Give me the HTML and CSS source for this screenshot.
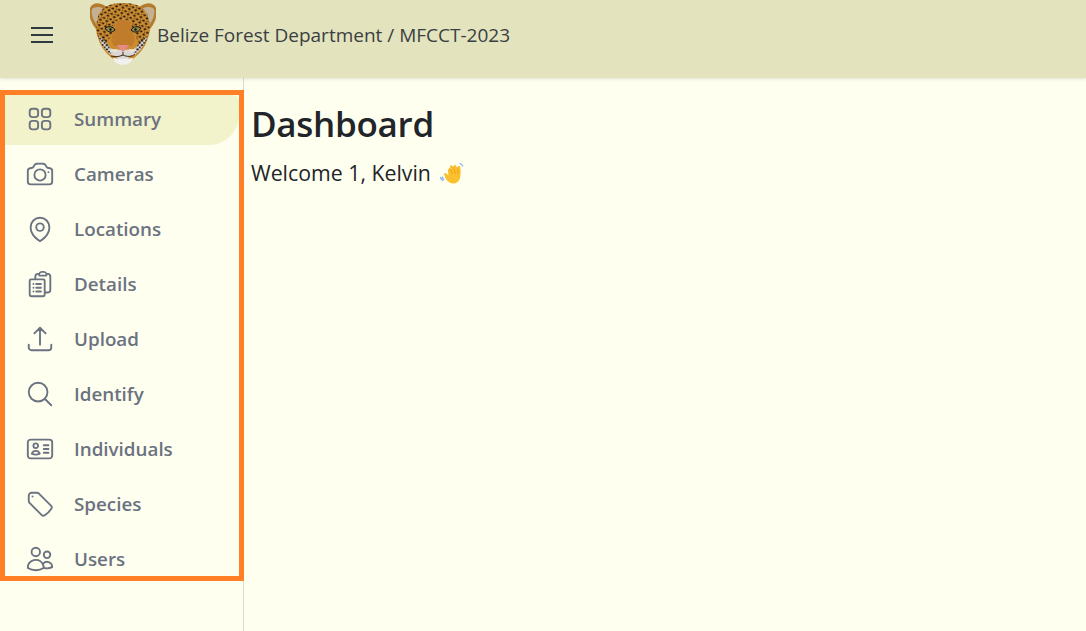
FILE: index.html
```
<!DOCTYPE html>
<html lang="en">
<head>
<meta charset="utf-8">
<title>Dashboard</title>
<link rel="stylesheet" href="styles.css">
</head>
<body>
<svg class="defs" width="0" height="0" aria-hidden="true">
  <defs>
    <pattern id="spots" width="6.500" height="5.500" patternUnits="userSpaceOnUse" patternTransform="rotate(12)">
      <ellipse cx="1.600" cy="1.400" rx="1.400" ry="1" fill="#21160c"/>
      <ellipse cx="4.800" cy="4" rx="1.500" ry="1" fill="#21160c"/>
      <circle cx="5.200" cy="1.200" r="0.600" fill="#3a2610"/>
    </pattern>
    <pattern id="cheek" width="4.400" height="4.400" patternUnits="userSpaceOnUse">
      <circle cx="1.200" cy="1.200" r="1.100" fill="#17120d"/>
      <circle cx="3.400" cy="3.400" r="1" fill="#17120d"/>
    </pattern>
  </defs>
</svg>
<header class="topbar">
  <button class="menu" type="button" aria-label="Menu"><span></span><span></span><span></span></button>
  <svg class="logo" viewBox="90 0 66 66" width="66" height="66" aria-hidden="true">
    <path d="M90 8c3-7 13-6 20 2l5 6-14 18c-7-5-14-17-11-26z" fill="#b47c2c"/>
    <path d="M92 9c3-3 11-3 16 3l3 5-10 13c-5-5-11-14-9-21z" fill="#c4b194"/>
    <path d="M99 13l7 9-5 8c-3-5-4-12-2-17z" fill="#8e8370"/>
    <path d="M156 8c-3-7-13-6-20 2l-5 6 14 18c7-5 14-17 11-26z" fill="#b47c2c"/>
    <path d="M154 9c-3-3-11-3-16 3l-3 5 10 13c5-5 11-14 9-21z" fill="#c4b194"/>
    <path d="M147 13l-7 9 5 7c3-5 4-12 2-16z" fill="#8e8370"/>
    <path d="M123 3c15 0 24 5 26 18 2 6 1 12-2 20-3 8-10 17-24 24-14-7-21-16-24-24-3-8-4-14-2-20 2-13 11-18 26-18z" fill="#cc8c30"/>
    <path d="M99 36c1 7 6 14 12 19l5 1 7 9 7-9 5-1c6-5 11-12 12-19-5 4-9 10-13 13l-11 1-11-1c-4-3-8-9-13-13z" fill="#dbd7d5"/>
    <path d="M123 3c15 0 24 5 26 18 1 5 1 9 0 14l-10 8-5-10-4-12h-14l-4 12-5 10-10-8c-1-5-1-9 0-14 2-13 11-18 26-18z" fill="url(#spots)"/>
    <path d="M98 36l7 3 5 9 3 4-3 2c-5-4-10-11-12-18zM148 36l-7 3-5 9-3 4 3 2c5-4 10-11 12-18z" fill="url(#cheek)"/>
    <path d="M117 20h12l6 20-3 6h-18l-3-6z" fill="#c07c2a"/>
    <path d="M105 28c3-2 8-2 10 2-3 3-7 3-10-2zM141 28c-3-2-8-2-10 2 3 3 7 3 10-2z" fill="#8a8a4c" stroke="#17120d" stroke-width="1"/>
    <circle cx="110.500" cy="29.500" r="1.200" fill="#17120d"/>
    <circle cx="135.500" cy="29.500" r="1.200" fill="#17120d"/>
    <path d="M117 45h12l-3 4-3 3-3-3z" fill="#e88a84"/>
    <path d="M123 52v3m-12 1c3 1 8 1 12-1 4 2 9 2 12-1" fill="none" stroke="#3a2a1a" stroke-width="1"/>
    <path d="M113 58c6 1 14 1 20 0-1 4-5 7-10 7s-9-3-10-7z" fill="#f1f0ee"/>
    <path d="M110 50c2 1 5 1 7 0m12 0c2 1 5 1 7 0" fill="none" stroke="#efe5d3" stroke-width="2"/>
  </svg>
  <span class="title">Belize Forest Department / MFCCT-2023</span>
</header>
<div class="layout">
  <aside class="sidebar">
    <nav class="nav">
      <a class="item active" href="#">
        <svg class="icon" viewBox="0 0 24 24"><path d="M3.750 6A2.250 2.250 0 0 1 6 3.750h2.250A2.250 2.250 0 0 1 10.500 6v2.250a2.250 2.250 0 0 1-2.250 2.250H6a2.250 2.250 0 0 1-2.250-2.250V6ZM3.750 15.750A2.250 2.250 0 0 1 6 13.500h2.250a2.250 2.250 0 0 1 2.250 2.250V18a2.250 2.250 0 0 1-2.250 2.250H6A2.250 2.250 0 0 1 3.750 18v-2.250ZM13.500 6a2.250 2.250 0 0 1 2.250-2.250H18A2.250 2.250 0 0 1 20.250 6v2.250A2.250 2.250 0 0 1 18 10.500h-2.250a2.250 2.250 0 0 1-2.250-2.250V6ZM13.500 15.750a2.250 2.250 0 0 1 2.250-2.250H18a2.250 2.250 0 0 1 2.250 2.250V18A2.250 2.250 0 0 1 18 20.250h-2.250A2.250 2.250 0 0 1 13.500 18v-2.250Z"/></svg>
        <span>Summary</span>
      </a>
      <a class="item" href="#">
        <svg class="icon" viewBox="0 0 24 24"><path d="M6.827 6.175A2.31 2.31 0 0 1 5.186 7.23c-.38.054-.757.112-1.134.175C2.999 7.58 2.25 8.507 2.25 9.574V18a2.25 2.25 0 0 0 2.25 2.25h15A2.25 2.25 0 0 0 21.75 18V9.574c0-1.067-.75-1.994-1.802-2.169a47.865 47.865 0 0 0-1.134-.175 2.31 2.31 0 0 1-1.64-1.055l-.822-1.316a2.192 2.192 0 0 0-1.736-1.039 48.774 48.774 0 0 0-5.232 0 2.192 2.192 0 0 0-1.736 1.039l-.821 1.316Z"/><path d="M16.5 12.75a4.5 4.5 0 1 1-9 0 4.5 4.5 0 0 1 9 0ZM18.75 10.5h.008v.008h-.008V10.5Z"/></svg>
        <span>Cameras</span>
      </a>
      <a class="item" href="#">
        <svg class="icon" viewBox="0 0 24 24"><path d="M15 10.5a3 3 0 1 1-6 0 3 3 0 0 1 6 0Z"/><path d="M19.5 10.5c0 7.142-7.5 11.25-7.5 11.25S4.5 17.642 4.5 10.5a7.5 7.5 0 1 1 15 0Z"/></svg>
        <span>Locations</span>
      </a>
      <a class="item" href="#">
        <svg class="icon" viewBox="0 0 24 24"><path d="M9 12h3.75M9 15h3.75M9 18h3.75m3 .75H18a2.25 2.25 0 0 0 2.25-2.25V6.108c0-1.135-.845-2.098-1.976-2.192a48.424 48.424 0 0 0-1.123-.08m-5.801 0c-.065.21-.1.433-.1.664 0 .414.336.75.75.75h4.5a.75.75 0 0 0 .75-.75 2.25 2.25 0 0 0-.1-.664m-5.8 0A2.251 2.251 0 0 1 13.5 2.25H15c1.012 0 1.867.668 2.15 1.586m-5.8 0c-.376.023-.75.05-1.124.08C9.095 4.01 8.25 4.973 8.25 6.108V8.25m0 0H4.875c-.621 0-1.125.504-1.125 1.125v11.25c0 .621.504 1.125 1.125 1.125h9.75c.621 0 1.125-.504 1.125-1.125V9.375c0-.621-.504-1.125-1.125-1.125H8.25ZM6.75 12h.008v.008H6.75V12Zm0 3h.008v.008H6.75V15Zm0 3h.008v.008H6.75V18Z"/></svg>
        <span>Details</span>
      </a>
      <a class="item" href="#">
        <svg class="icon" viewBox="0 0 24 24"><path d="M3 16.5v2.25A2.25 2.25 0 0 0 5.25 21h13.5A2.25 2.25 0 0 0 21 18.75V16.5m-13.5-9L12 3m0 0 4.5 4.5M12 3v13.5"/></svg>
        <span>Upload</span>
      </a>
      <a class="item" href="#">
        <svg class="icon" viewBox="0 0 24 24"><path d="m21 21-5.197-5.197m0 0A7.5 7.5 0 1 0 5.196 5.196a7.5 7.5 0 0 0 10.607 10.607Z"/></svg>
        <span>Identify</span>
      </a>
      <a class="item" href="#">
        <svg class="icon" viewBox="0 0 24 24"><path d="M15 9h3.75M15 12h3.75M15 15h3.75M4.5 19.5h15a2.25 2.25 0 0 0 2.25-2.25V6.75A2.25 2.25 0 0 0 19.5 4.5h-15a2.25 2.25 0 0 0-2.25 2.25v10.5A2.25 2.25 0 0 0 4.5 19.5Zm6-10.125a1.875 1.875 0 1 1-3.75 0 1.875 1.875 0 0 1 3.75 0Zm1.294 6.336a6.721 6.721 0 0 1-3.17.789 6.721 6.721 0 0 1-3.168-.789 3.376 3.376 0 0 1 6.338 0Z"/></svg>
        <span>Individuals</span>
      </a>
      <a class="item" href="#">
        <svg class="icon" viewBox="0 0 24 24"><path d="M9.568 3H5.25A2.25 2.25 0 0 0 3 5.25v4.318c0 .597.237 1.17.659 1.591l9.581 9.581c.699.699 1.78.872 2.607.33a18.095 18.095 0 0 0 5.223-5.223c.542-.827.369-1.908-.33-2.607L11.16 3.66A2.25 2.25 0 0 0 9.568 3Z"/><path d="M6 6h.008v.008H6V6Z"/></svg>
        <span>Species</span>
      </a>
      <a class="item" href="#">
        <svg class="icon" viewBox="0 0 24 24"><path d="M15 19.128a9.38 9.38 0 0 0 2.625.372 9.337 9.337 0 0 0 4.121-.952 4.125 4.125 0 0 0-7.533-2.493M15 19.128v-.003c0-1.113-.285-2.16-.786-3.07M15 19.128v.106A12.318 12.318 0 0 1 8.624 21c-2.331 0-4.512-.645-6.374-1.766l-.001-.109a6.375 6.375 0 0 1 11.964-3.07M12 6.375a3.375 3.375 0 1 1-6.75 0 3.375 3.375 0 0 1 6.75 0Zm8.25 2.25a2.625 2.625 0 1 1-5.25 0 2.625 2.625 0 0 1 5.25 0Z"/></svg>
        <span>Users</span>
      </a>
    </nav>
  </aside>
  <main class="content">
    <h1 class="heading">Dashboard</h1>
    <p class="welcome">Welcome 1, Kelvin
      <svg class="wave" viewBox="0 0 26 24" width="26" height="24" aria-hidden="true">
        <path d="M9 9c-1-1.500 1-3 2.300-1.700l.7.900-1-3c-.6-1.800 1.800-2.600 2.600-1l1.300 3-.4-2.600c-.3-1.800 2.200-2.300 2.800-.6l1 3.500.3-2.300c.2-1.600 2.500-1.500 2.700.1.500 3.500.5 7.200-.3 10.500-.9 3.800-3.800 6-7.300 5.800-3-.2-5-2-6.800-4.500L5.300 13c-1-1.500.9-2.800 2.100-1.600l2 2.200z" fill="#fbc02d"/>
        <path d="M10.500 6l3 6M14 4.500l2.500 7M18 5l1.500 6.500" fill="none" stroke="#eb9b14" stroke-width=".8"/>
        <path d="M21 1.500c1.300.3 2.300 1.300 2.700 2.600M1.500 15.500c.3 1.400 1.300 2.500 2.600 3M3.300 15c.2.900.8 1.600 1.600 2" fill="none" stroke="#7fb2ee" stroke-width="1.200" stroke-linecap="round"/>
      </svg>
    </p>
  </main>
</div>
</body>
</html>
```

FILE: styles.css
```
* {
  box-sizing: border-box;
}

html,
body {
  height: 100%;
}

body {
  margin: 0;
  overflow: hidden;
  background: #fffff0;
  color: #212529;
  font-family: "Open Sans", "Noto Sans", "Liberation Sans", sans-serif;
}

.defs {
  display: block;
  height: 0;
}

.topbar {
  display: flex;
  align-items: center;
  height: 78px;
  padding-bottom: 8px;
  background: #e3e3be;
  box-shadow: 0 1px 4px rgba(0, 0, 0, 0.12);
  position: relative;
  z-index: 1;
}

.menu {
  display: flex;
  flex-direction: column;
  gap: 5px;
  width: 22px;
  margin-left: 31px;
  padding: 0;
  border: 0;
  background: none;
}

.menu span {
  display: block;
  width: 22px;
  height: 2px;
  background: #2e3a3f;
}

.logo {
  flex: none;
  margin-left: 37px;
  align-self: flex-start;
}

.title {
  margin-left: 1px;
  font-size: 19px;
  color: #3a3f42;
}

.layout {
  display: flex;
  height: 553px;
}

.sidebar {
  flex: none;
  width: 244px;
  padding-top: 12px;
  border-right: 1px solid #dcdcd0;
}

.nav {
  display: flex;
  flex-direction: column;
  gap: 5px;
  width: 244px;
  height: 491px;
  overflow: hidden;
  border: 5px solid #ff7f27;
}

.item {
  display: flex;
  flex: none;
  align-items: center;
  gap: 19px;
  height: 50px;
  padding-bottom: 2px;
  padding-left: 20px;
  color: #6b7280;
  font-size: 18.800px;
  font-weight: 600;
  text-decoration: none;
}

.item.active {
  background: #f2f2cb;
  border-radius: 0 6px 30px 0;
}

.icon {
  flex: none;
  width: 30px;
  height: 30px;
  fill: none;
  stroke: currentColor;
  stroke-width: 1.5;
  stroke-linecap: round;
  stroke-linejoin: round;
}

.content {
  flex: 1;
  padding: 21px 0 0 7px;
}

.heading {
  margin: 0;
  font-size: 35px;
  font-weight: 600;
  letter-spacing: -0.300px;
  line-height: 50px;
}

.welcome {
  margin: 9px 0 0;
  font-size: 21.300px;
  line-height: 30px;
}

.wave {
  vertical-align: -5px;
  margin-left: 3px;
}
```
